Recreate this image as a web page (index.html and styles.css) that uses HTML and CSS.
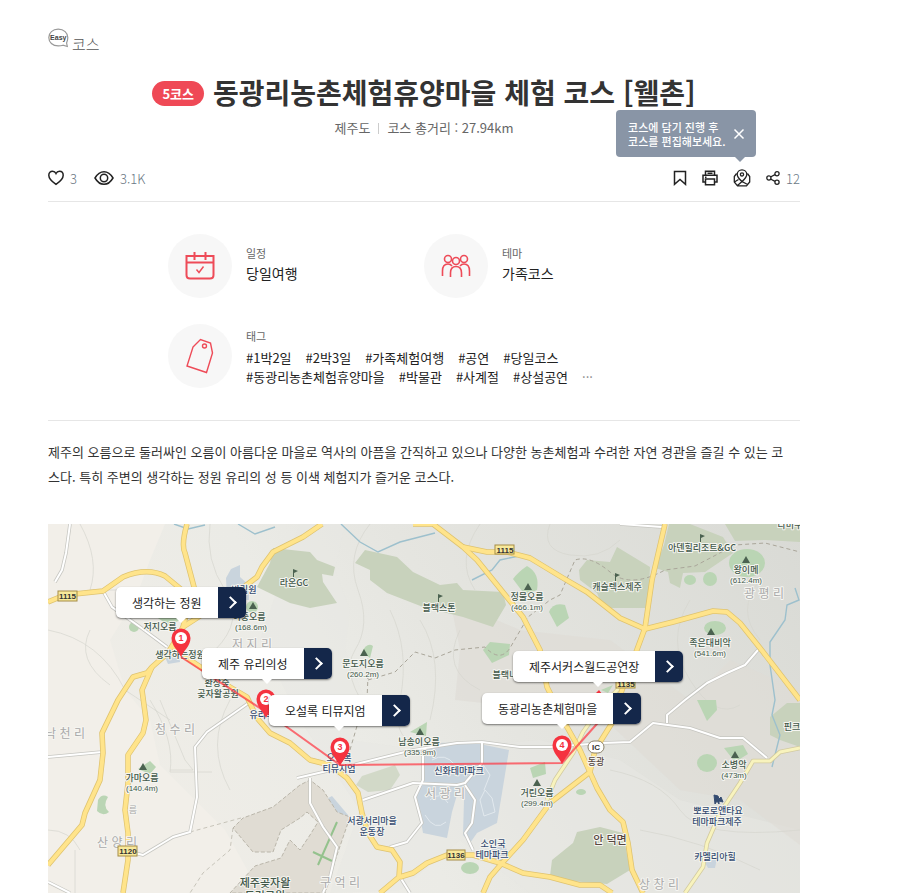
FILE: index.html
```html
<!DOCTYPE html>
<html lang="ko">
<head>
<meta charset="utf-8">
<meta name="viewport" content="width=device-width, initial-scale=1">
<title>동광리농촌체험휴양마을 체험 코스</title>
<link rel="stylesheet" href="styles.css">
</head>
<body>
<main class="page">
  <div class="category">
    <svg class="easy" width="22" height="20" viewBox="0 0 22 20" aria-hidden="true">
      <path d="M19.300 18.500L15 17.200C13.500 17.700 12 17.900 10.300 17.900C4.500 17.900 .8 14.200 .8 9.500C.8 4.800 4.600 1.200 10.200 1.200C15.900 1.200 19.800 4.800 19.800 9.500C19.800 12 19 14 18.600 15Z" fill="#fff" stroke="#999" stroke-width="1.200"/>
      <text x="10.300" y="12" class="easy-text">Easy</text>
    </svg>
    <span>코스</span>
  </div>

  <header class="heading">
    <div class="title-row">
      <span class="badge">5코스</span>
      <h1>동광리농촌체험휴양마을 체험 코스 [웰촌]</h1>
    </div>
    <p class="meta"><span>제주도</span><span class="bar"></span><span>코스 총거리 : 27.94km</span></p>
  </header>

  <div class="toolbar">
    <div class="group">
      <button type="button" class="tool" aria-label="좋아요">
        <svg width="16" height="16" viewBox="0 0 16 16"><path d="M8 14.300C5 12.300 .8 9 .8 5.200C.8 2.800 2.500 1.200 4.500 1.200C6.200 1.200 7.400 2.200 8 3.500C8.600 2.200 9.800 1.200 11.500 1.200C13.500 1.200 15.200 2.800 15.200 5.200C15.200 9 11 12.300 8 14.300Z" class="line"/></svg>
        <span>3</span>
      </button>
      <span class="tool views">
        <svg width="20" height="16" viewBox="0 0 20 16"><path d="M1 8C3.200 4.200 6.500 1.700 10 1.700S16.800 4.200 19 8C16.800 11.800 13.500 14.300 10 14.300S3.200 11.800 1 8Z" class="line"/><circle cx="10" cy="8" r="3.700" class="line"/></svg>
        <span>3.1K</span>
      </span>
    </div>
    <div class="group actions">
      <button type="button" class="tool" aria-label="북마크">
        <svg width="14" height="16" viewBox="0 0 14 16"><path d="M1.500 1.500H12.500V14.300L7 9.500L1.500 14.300Z" class="line"/></svg>
      </button>
      <button type="button" class="tool" aria-label="인쇄">
        <svg width="16" height="16" viewBox="0 0 16 16"><path d="M3.500 5V1.200H12.500V5M3.500 12H1V5.300H15V12H12.500M3.500 9H12.500V14.800H3.500ZM5.500 3.200H10.500M3 7.200H4.500" class="line"/></svg>
      </button>
      <div class="tip-anchor">
        <button type="button" class="tool" aria-label="코스에 담기">
          <svg width="18" height="18" viewBox="0 0 18 18"><g class="line fine"><path d="M9 12.500C6.500 10.200 4.200 8 4.200 5.400A4.800 4.600 0 0 1 13.800 5.400C13.800 8 11.500 10.200 9 12.500Z"/><circle cx="9" cy="5.400" r="1.600"/><path d="M3.600 4.500L1.300 7.500V13L4.500 16.800H13.500L16.700 13V7.500L14.400 4.500M1.800 12.800L5.500 10.500M4.500 16.500L9 12.500L15 15.800"/></g></svg>
        </button>
        <div class="tooltip" role="status">
          <p>코스에 담기 진행 후<br>코스를 편집해보세요.</p>
          <button type="button" aria-label="닫기"><svg width="12" height="12" viewBox="0 0 12 12"><path d="M1.500 1.500L10.500 10.500M10.500 1.500L1.500 10.500" stroke="#fff" stroke-width="1.500"/></svg></button>
        </div>
      </div>
      <button type="button" class="tool share" aria-label="공유">
        <svg width="14" height="14" viewBox="0 0 14 14"><g class="line fine"><path d="M4.500 6L9 3.600M4.500 8L9 10.400"/><circle cx="2.900" cy="7" r="2.100"/><circle cx="11" cy="2.800" r="2.100"/><circle cx="11" cy="11.200" r="2.100"/></g></svg>
        <span>12</span>
      </button>
    </div>
  </div>

  <section class="info">
    <div class="item">
      <span class="disc"><svg width="30" height="30" viewBox="0 0 30 30"><path d="M1.500 5H28.500V24Q28.500 27.500 25 27.500H5Q1.500 27.500 1.500 24ZM1.500 11.500H28.500M9.500 1V9M20.500 1V9" class="red"/><path d="M11.500 18.500L14 21.500L18.500 15.500" class="red thin"/></svg></span>
      <dl><dt>일정</dt><dd>당일여행</dd></dl>
    </div>
    <div class="item">
      <span class="disc"><svg width="30" height="24" viewBox="0 0 30 24"><g class="red mid"><circle cx="7" cy="5" r="3.500"/><circle cx="23" cy="5" r="3.500"/><circle cx="15" cy="7" r="3.500"/><path d="M1.500 22V17Q1.500 10 7 10Q9.500 10 11 12M28.500 22V17Q28.500 10 23 10Q20.500 10 19 12M9.500 23V19Q9.500 12.500 15 12.500T20.500 19V23"/></g></svg></span>
      <dl><dt>테마</dt><dd>가족코스</dd></dl>
    </div>
    <div class="item wide">
      <span class="disc"><svg width="30" height="36" viewBox="0 0 30 36"><path d="M8 9L15.500 1.500L25.500 5L27.500 15L21.500 34.500L2 28Z" class="red thin"/><circle cx="19.500" cy="8" r="2" class="red thin"/></svg></span>
      <dl><dt>태그</dt><dd class="tags"><span>#1박2일</span><span>#2박3일</span><span>#가족체험여행</span><span>#공연</span><span>#당일코스</span><span>#동광리농촌체험휴양마을</span><span>#박물관</span><span>#사계절</span><span>#상설공연</span><span class="more">···</span></dd></dl>
    </div>
  </section>

  <p class="description">제주의 오름으로 둘러싸인 오름이 아름다운 마을로 역사의 아픔을 간직하고 있으나 다양한 농촌체험과 수려한 자연 경관을 즐길 수 있는 코<br>스다. 특히 주변의 생각하는 정원 유리의 성 등 이색 체험지가 즐거운 코스다.</p>

  <section class="map">
    <svg class="terrain" viewBox="48 524 752 369" role="img" aria-label="코스 지도">
      <defs>
        <linearGradient id="land" x1="0" y1="0.300" x2="1" y2="0"><stop offset="0" stop-color="#efede7"/><stop offset=".3" stop-color="#ebebe6"/><stop offset=".5" stop-color="#e5e5e0"/><stop offset="1" stop-color="#d9dad5"/></linearGradient>
        <path id="peak" d="M0 -4L4 3H-4Z"/>
        <path id="flag" d="M-2 4V-4L3 -2L-1 0V4Z"/>
        <g id="pin"><path d="M0 0C-3 -7 -9.500 -11 -9.500 -19A9.500 9.500 0 0 1 9.500 -19C9.500 -11 3 -7 0 0Z" fill="#f5333f"/><circle cy="-19" r="6" fill="#fff"/></g>
      </defs>
      <rect x="48" y="524" width="752" height="369" fill="url(#land)"/>
      <path d="M48 524H165L150 560L135 600L110 640L125 690L150 720L160 765L195 800L225 830L260 893H48Z" fill="#f2efe9"/>
      <path d="M345 524L335 570L350 610L345 650L365 700L350 740L420 750L540 740L620 760L680 800L800 830V893H530L460 840L400 890L330 893L360 810L300 720L260 640L300 524Z" fill="#e7e8e3" opacity=".5"/>
      <path d="M450 600L460 650L455 700L600 715L680 790L740 800L800 845V690L730 660L690 700L610 640L520 630Z" fill="#dedcd6" opacity=".65"/>

      <g class="contour">
        <path d="M210 524Q205 560 225 590T215 650M370 524Q345 555 358 590T355 650T375 720M390 610Q410 650 400 700T430 740M420 620Q445 660 430 720M460 630Q440 670 480 690M230 700Q205 745 230 790M480 524Q455 560 475 590M550 524Q540 550 570 555T620 540M690 600Q665 640 690 680T740 705M760 580Q735 610 760 640M610 770Q660 780 680 810T800 830M640 830Q700 840 760 870M80 524Q100 560 90 590H150M48 630Q100 640 125 690L170 720M150 700Q175 740 170 772H212M90 630Q75 660 110 685M48 830Q70 830 80 850M75 850V893M160 700L185 760L193 770H170"/>
      </g>

      <g fill="#c8d2bc">
        <path d="M273 548L310 552L317 560L335 567L333 576L322 574L323 582L337 603L310 608L290 603L257 587L270 563Z"/>
        <path d="M355 563L365 550L397 557L413 572L440 585L457 583L463 590L503 592L506 605L493 627L463 617L423 607L387 593L370 580V570Z"/>
        <path d="M579 570L587 560L610 562L617 547L650 567L648 608H603L597 593L580 580Z"/>
        <path d="M669 524H690L723 537L733 553L705 572L683 573L680 588L670 583L668 572L655 568L664 545Z"/>
        <path d="M725 524H800V542L765 540L735 541Z"/>
        <path d="M550 876L552 860L573 843L577 832L600 827L623 833L630 870L607 884L570 881Z"/>
        <path d="M770 717L787 703H800V747L780 740L770 735Z"/>
        <path d="M356 785L362 776L395 765L400 775L390 790L368 792Z" fill="#d2d9c8"/>
      </g>
      <g fill="#bad5b4">
        <ellipse cx="747" cy="563" rx="18" ry="14"/><circle cx="710" cy="579" r="7"/><ellipse cx="690" cy="580" rx="6" ry="5"/>
        <path d="M513 579Q518 572 527 566Q540 573 537 590L525 595Z"/><path d="M549 612Q553 602 565 605L569 618L557 627Z"/>
        <ellipse cx="715" cy="628" rx="11" ry="7"/><path d="M483 650L490 642L510 644L509 655L492 663Z"/><path d="M362 652Q367 642 373 646L370 658Z"/>
        <ellipse cx="707" cy="763" rx="10" ry="9"/><path d="M724 748L743 745L748 754L735 762Z"/><path d="M697 700H716L717 710L707 721Z"/><path d="M410 732L427 722L426 736Z"/>
        <path d="M530 768L545 762L546 774L533 778Z"/><ellipse cx="470" cy="868" rx="9" ry="6"/><path d="M98 800Q102 793 108 797Q102 806 109 812Q103 817 97 811Z"/><path d="M138 769L150 761L156 767L150 774Z"/>
        <circle cx="134" cy="627" r="5"/><path d="M152 614H181V620L168 625Z"/><circle cx="252" cy="607" r="6"/><path d="M601 690L613 685L608 693Z"/><ellipse cx="581" cy="792" rx="5" ry="3"/>
      </g>
      <g fill="#c9d4dd">
        <path d="M423 748L437 743L470 742L509 750L502 793L497 823L477 833L470 843L463 835L464 800L457 795L452 812L447 838L423 833L416 793L423 780Z"/>
        <path d="M226 578L231 569L240 565V577L249 585V600H227Z"/><path d="M319 803L332 796L348 815L346 820L325 817Z"/><path d="M164 655L178 648L180 662L168 664Z"/><path d="M488 850L505 845L510 859L492 862Z"/><path d="M704 861L717 858L715 868L708 868Z"/><path d="M310 853L333 862L325 868L310 865Z"/>
      </g>
      <path d="M480 800L485 790L492 798L495 812L484 816ZM430 800Q440 790 448 803M425 815Q435 832 446 822M432 760Q445 752 455 765M480 760L490 775L484 790" fill="none" stroke="#e2e9ee"/>
      <path d="M300 785L273 807L243 818L233 828L253 852H273L281 830L300 818L307 812L318 822L310 835L300 850L290 840L281 858L255 866L230 893H325L337 855L350 817L337 812L323 790L310 780Z" fill="#e0dcd3" stroke="#bab6aa" stroke-dasharray="4 2"/>
      <path d="M241 818L190 832M233 828L230 850L203 873L190 893" class="trail" opacity=".6"/>
      <path d="M368 680L395 672L415 652L435 658L455 650L485 647Q500 663 510 648L528 617L550 600L560 595L575 560Q590 555 610 572T665 570L695 566L735 545L765 543L800 552M357 726L347 760M367 700L368 676" class="trail"/>
      <path d="M174 524L188 529L205 525M238 524L255 534L275 527M341 524L360 542L378 552L400 542L435 533M472 580L492 570L500 560L519 556M795 588L799 600L787 605L785 620L770 642V665L775 700L772 715L780 735L772 767" class="river"/>
      <path d="M337 822L318 865M313 852L332 861" stroke="#94c28d" stroke-width="2" fill="none"/>

      <g>
        <path class="white-case" d="M70 524L66 553L62 570L55 582M103 591L112 607L140 627L167 647M48 757L70 755L102 752M250 702L207 732L195 747L197 797L190 832L173 837L143 855L131 852M297 778L340 768L413 750L457 743L482 742L520 747H550L603 743L630 742L653 723L690 728L720 738L743 738L767 758M667 723V715L685 700L707 683L727 673L745 665L758 650M363 800L413 783L457 785L465 783L482 763V742M423 750V780L415 797L422 823L407 842L390 847M465 785L475 800L472 823L465 833L473 850M310 778V803L323 827L337 847L330 877L323 893M400 877L410 893M48 882L70 893M620 524L662 527"/>
        <path class="white" d="M70 524L66 553L62 570L55 582M103 591L112 607L140 627L167 647M48 757L70 755L102 752M250 702L207 732L195 747L197 797L190 832L173 837L143 855L131 852M297 778L340 768L413 750L457 743L482 742L520 747H550L603 743L630 742L653 723L690 728L720 738L743 738L767 758M667 723V715L685 700L707 683L727 673L745 665L758 650M363 800L413 783L457 785L465 783L482 763V742M423 750V780L415 797L422 823L407 842L390 847M465 785L475 800L472 823L465 833L473 850M310 778V803L323 827L337 847L330 877L323 893M400 877L410 893M48 882L70 893M620 524L662 527"/>
      </g>
      <path class="pale-case" d="M595 715L583 732L573 753L555 780L547 800M600 708L622 685M800 748L780 752L770 761L753 761L740 783L720 813L707 843L703 867L685 893"/>
      <path class="pale" d="M595 715L583 732L573 753L555 780L547 800M600 708L622 685M800 748L780 752L770 761L753 761L740 783L720 813L707 843L703 867L685 893"/>
      <g class="road-case">
        <path d="M48 602L65 595L103 591L123 577Q147 567 165 576L182 590M187 524Q181 545 185 553L194 587L183 627L168 653L152 667L147 673L133 677L118 700L102 733L103 753L100 780L85 813L82 825L48 865"/>
        <path d="M152 667L142 690L146 720L143 733L128 755V783L125 810L128 833V860L123 893M322 524L303 537L273 552L262 567L257 577L240 590L183 627"/>
        <path d="M173 647L190 660L230 687L247 697L257 718L270 733L290 743L310 760L330 765L347 778L358 793L362 813L368 833L377 847L392 850L400 862L399 877L380 893M400 877L413 873L427 863L447 855H473L500 863L523 873L550 877L580 885H600L612 893"/>
        <path d="M483 893L490 877L503 862L523 840L550 803L590 772L595 750L612 723L622 690L645 628L652 580L665 524M413 524H433L463 547L477 560L523 617L540 650L547 687L567 727L580 750L597 788L610 810L623 822L628 843L632 870L643 893"/>
        <path d="M463 547L487 552H507L530 558L563 578L587 592L620 618L645 629L673 622L713 611L727 612L740 623L760 648L800 700"/>
      </g>
      <g class="road">
        <path d="M48 602L65 595L103 591L123 577Q147 567 165 576L182 590M187 524Q181 545 185 553L194 587L183 627L168 653L152 667L147 673L133 677L118 700L102 733L103 753L100 780L85 813L82 825L48 865"/>
        <path d="M152 667L142 690L146 720L143 733L128 755V783L125 810L128 833V860L123 893M322 524L303 537L273 552L262 567L257 577L240 590L183 627"/>
        <path d="M173 647L190 660L230 687L247 697L257 718L270 733L290 743L310 760L330 765L347 778L358 793L362 813L368 833L377 847L392 850L400 862L399 877L380 893M400 877L413 873L427 863L447 855H473L500 863L523 873L550 877L580 885H600L612 893"/>
        <path d="M483 893L490 877L503 862L523 840L550 803L590 772L595 750L612 723L622 690L645 628L652 580L665 524M413 524H433L463 547L477 560L523 617L540 650L547 687L567 727L580 750L597 788L610 810L623 822L628 843L632 870L643 893"/>
        <path d="M463 547L487 552H507L530 558L563 578L587 592L620 618L645 629L673 622L713 611L727 612L740 623L760 648L800 700"/>
      </g>

      <g class="district">
        <text x="252" y="649">저 지 리</text><text x="175" y="734">청 수 리</text><text x="65" y="738">낙 천 리</text><text x="117" y="847">산 양 리</text><text x="445" y="798">서 광 리</text><text x="340" y="887">구 억 리</text><text x="764" y="598">광 평 리</text><text x="659" y="889">상 창 리</text><text x="133" y="813" class="small">름</text>
      </g>

      <g class="shield">
        <rect x="58" y="591" width="19" height="10"/><rect x="495" y="545" width="19" height="9"/><rect x="118" y="846" width="19" height="10"/><rect x="447" y="850" width="18" height="10"/><rect x="616" y="679" width="19" height="9"/><rect x="588" y="741" width="16" height="12" rx="6" class="ic"/>
        <text x="67.500" y="599">1115</text><text x="505" y="553">1115</text><text x="128" y="854">1120</text><text x="456" y="858">1136</text><text x="626" y="687">1135</text><text x="596" y="750">IC</text>
      </g>

      <g fill="#4b6250">
        <use href="#peak" x="253" y="606"/><use href="#peak" x="364" y="653"/><use href="#peak" x="528" y="587"/><use href="#peak" x="746" y="560"/><use href="#peak" x="711" y="632"/><use href="#peak" x="143" y="767"/><use href="#peak" x="420" y="732"/><use href="#peak" x="537" y="783"/><use href="#peak" x="735" y="755"/>
        <use href="#flag" x="295" y="573"/><use href="#flag" x="440" y="598"/><use href="#flag" x="617" y="577"/><use href="#flag" x="702" y="538"/>
      </g>
      <path d="M714 795L718 796L719 799L721 797L723 802L719 801V804L717 801L715 804Z" fill="#344b70" stroke="#344b70"/>

      <g class="place green">
        <text x="294" y="586">라온GC</text><text x="439" y="611">블랙스톤</text><text x="617" y="590">캐슬렉스제주</text><text x="702" y="551">아덴힐리조트&amp;GC</text><text x="790" y="528">라미쿠</text><text x="505" y="678">블랙나</text><text x="792" y="730">핀크</text>
        <text x="160" y="630">저지오름</text><text x="249" y="620">허중오름</text><text x="251" y="630" class="height">(168.6m)</text>
        <text x="363" y="667">문도지오름</text><text x="363" y="677" class="height">(260.2m)</text>
        <text x="527" y="600">정물오름</text><text x="527" y="610" class="height">(466.1m)</text>
        <text x="746" y="573">왕이메</text><text x="746" y="583" class="height">(612.4m)</text>
        <text x="710" y="646">족은대비악</text><text x="710" y="656" class="height">(541.6m)</text>
        <text x="142" y="781">가마오름</text><text x="142" y="791" class="height">(140.4m)</text>
        <text x="419" y="745">남송이오름</text><text x="420" y="755" class="height">(335.9m)</text>
        <text x="537" y="796">거린오름</text><text x="537" y="806" class="height">(299.4m)</text>
        <text x="734" y="768">소병악</text><text x="734" y="778" class="height">(473m)</text>
        <text x="180" y="658">생각하는정원</text><text x="217" y="686">환상숲</text><text x="218" y="697">곶자왈공원</text><text x="265" y="887" class="large">제주곶자왈</text><text x="265" y="900" class="large">도립공원</text>
      </g>
      <g class="place blue">
        <text x="244" y="593">방림원</text><text x="266" y="718">유리의성</text><text x="339" y="761">오설록</text><text x="339" y="772">티뮤지엄</text><text x="459" y="774">신화테마파크</text><text x="372" y="824">서광서리마을</text><text x="372" y="835">운동장</text><text x="493" y="847">소인국</text><text x="492" y="858">테마파크</text><text x="718" y="814">뽀로로앤타요</text><text x="717" y="825">테마파크제주</text><text x="715" y="860">카멜리아힐</text>
      </g>
      <g class="place brown"><text x="596" y="765">동광</text><text x="610" y="844" class="large">안 덕면</text></g>

      <path d="M181 657L266 712L340 765L562 763L604 716" fill="none" stroke="#ff3440" stroke-opacity=".7" stroke-width="2"/>
      <g class="pins">
        <use href="#pin" x="181" y="657"/><text x="181" y="641">1</text>
        <use href="#pin" x="266" y="718"/><text x="266" y="702">2</text>
        <use href="#pin" x="340" y="766"/><text x="340" y="750">3</text>
        <use href="#pin" x="562" y="764"/><text x="562" y="748">4</text>
        <path d="M595 694L599 690L602 694Z" fill="#f5333f"/>
      </g>
    </svg>
    <div class="stop stop-1"><span>생각하는 정원</span><a href="#garden" aria-label="생각하는 정원 보기"></a></div>
    <div class="stop stop-2"><span>제주 유리의성</span><a href="#glass" aria-label="제주 유리의성 보기"></a></div>
    <div class="stop stop-3"><span>오설록 티뮤지엄</span><a href="#tea" aria-label="오설록 티뮤지엄 보기"></a></div>
    <div class="stop stop-5"><span>제주서커스월드공연장</span><a href="#circus" aria-label="제주서커스월드공연장 보기"></a></div>
    <div class="stop stop-4"><span>동광리농촌체험마을</span><a href="#village" aria-label="동광리농촌체험마을 보기"></a></div>
  </section>
</main>
</body>
</html>
```
FILE: styles.css
```css
* { box-sizing: border-box; }
body, h1, p, dl, dd { margin: 0; }
body {
  background: #fff;
  color: #333;
  font-family: "Noto Sans CJK KR", "Noto Sans", sans-serif;
  font-size: 13px;
}
button {
  padding: 0;
  border: 0;
  background: none;
  font: inherit;
  color: inherit;
  cursor: pointer;
}
svg { display: block; }

.page { padding: 28px 110px 0 48px; }

.category {
  display: flex;
  gap: 2px;
  height: 28px;
  color: #555;
  font-size: 15px;
  line-height: 32px;
  font-weight: 300;
}
.easy-text {
  font: bold 7px "Liberation Sans", sans-serif;
  fill: #444;
  text-anchor: middle;
}

.heading { padding-top: 16px; }
.title-row {
  display: flex;
  justify-content: center;
  align-items: center;
  gap: 9px;
  height: 42px;
}
.badge {
  padding: 0 10px;
  border-radius: 13px;
  background: #ef4956;
  color: #fff;
  font-size: 13px;
  font-weight: 700;
  line-height: 25px;
}
h1 {
  font-size: 28px;
  line-height: 40px;
  padding-bottom: 2px;
  font-weight: 700;
  white-space: nowrap;
}
.meta {
  display: flex;
  justify-content: center;
  align-items: center;
  gap: 8px;
  padding-top: 4px;
  line-height: 20px;
  color: #666;
}
.bar { width: 1px; height: 11px; background: #ccc; }

.toolbar {
  display: flex;
  justify-content: space-between;
  height: 64px;
  padding-top: 28px;
  border-bottom: 1px solid #e6e6e6;
}
.group { display: flex; align-items: center; height: 24px; gap: 17px; }
.actions { gap: 15px; }
.tool {
  display: flex;
  align-items: center;
  gap: 6px;
  color: #6b7885;
  font-weight: 300;
}
.line { fill: none; stroke: #222; stroke-width: 1.5; }
.line.fine { stroke-width: 1.300; }
.tip-anchor { position: relative; }
.tooltip {
  position: absolute;
  right: -5px;
  bottom: 30px;
  display: flex;
  align-items: center;
  justify-content: space-between;
  width: 140px;
  height: 47px;
  padding: 0 11px 0 12px;
  border-radius: 4px;
  background: #8995a6;
  color: #fff;
  font-size: 11px;
  line-height: 14px;
  font-weight: 500;
  white-space: nowrap;
}
.tooltip::after {
  content: "";
  position: absolute;
  right: 11px;
  bottom: -5px;
  border: 5px solid transparent;
  border-top-color: #8995a6;
  border-bottom: 0;
}

.info {
  display: grid;
  grid-template-columns: 256px 256px;
  justify-content: center;
  gap: 26px 0;
  padding: 32px 0;
  border-bottom: 1px solid #e6e6e6;
}
.item { display: flex; align-items: center; gap: 14px; }
.item dl { padding-bottom: 4px; }
.wide { grid-column: span 2; }
.wide dl { padding: 0; }
.wide dt { margin-bottom: 3px; }
.disc {
  display: grid;
  place-items: center;
  flex: none;
  width: 64px;
  height: 64px;
  border-radius: 50%;
  background: #f7f7f7;
}
.red { fill: none; stroke: #ee4b58; stroke-width: 2; }
.red.mid { stroke-width: 1.600; }
.red.thin { stroke-width: 1.400; }
dt { color: #666; font-size: 11px; line-height: 18px; }
dd { color: #222; font-size: 14px; line-height: 22px; }
.tags {
  display: flex;
  flex-wrap: wrap;
  column-gap: 14px;
  max-width: 360px;
  font-size: 13px;
  line-height: 19px;
}
.more { color: #888; }

.description {
  padding: 18px 0 35px;
  line-height: 25px;
}

.map { position: relative; overflow: hidden; }
.terrain { width: 100%; height: auto; }
.contour { fill: none; stroke: #d5d5cf; stroke-width: 1; opacity: .7; }
.trail { fill: none; stroke: #aaa69a; stroke-width: 1; stroke-dasharray: 4 3; }
.river { fill: none; stroke: #9dc0cd; stroke-width: 1.400; }
.white-case, .white, .pale-case, .pale, .road-case, .road { fill: none; stroke-linejoin: round; }
.white-case { stroke: #c6c6c1; stroke-width: 3.500; }
.white { stroke: #fff; stroke-width: 2; }
.pale-case { stroke: #d2caa0; stroke-width: 4.500; }
.pale { stroke: #f8f3bd; stroke-width: 3; }
.road-case { stroke: #dfc36f; stroke-width: 5.500; }
.road { stroke: #ffe48b; stroke-width: 4; }
.shield { fill: #f8e99a; stroke: #a58c46; }
.shield .ic { fill: #fff; stroke: #8d846d; }
.shield text { fill: #333; stroke: none; font: bold 8px "Liberation Sans", sans-serif; text-anchor: middle; }
.place, .district { text-anchor: middle; paint-order: stroke; stroke: #f5f5f1; stroke-width: 2; stroke-linejoin: round; }
.place { font-size: 9px; font-weight: 500; }
.place .height { font: 8px "Liberation Sans", sans-serif; }
.place .large { font-size: 11px; }
.green { fill: #42584a; }
.blue { fill: #344b70; }
.brown { fill: #57483f; }
.district { font-size: 12px; fill: #aaa; }
.district .small { font-size: 9px; }
.pins text { fill: #f5333f; font: bold 9px "Liberation Sans", sans-serif; text-anchor: middle; }

.stop {
  position: absolute;
  display: flex;
  height: 31px;
  border-radius: 5px;
  background: #fff;
  box-shadow: 0 1px 2px rgba(0, 0, 0, .5);
  color: #222;
  font-size: 12px;
  line-height: 31px;
  white-space: nowrap;
}
.stop span { padding: 0 16px; }
.stop span::after {
  content: "";
  position: absolute;
  left: calc(50% - 5px);
  top: 31px;
  border: 5px solid transparent;
  border-top-color: #fff;
  border-bottom: 0;
}
.stop a {
  display: grid;
  place-items: center;
  width: 28px;
  border-radius: 0 5px 5px 0;
  background: #14274a;
}
.stop a::before {
  content: "";
  width: 7px;
  height: 7px;
  margin-right: 3px;
  border: solid #fff;
  border-width: 2px 2px 0 0;
  transform: rotate(45deg);
}
.stop-1 { left: calc(68 / 752 * 100%); top: calc(63 / 369 * 100%); }
.stop-2 { left: calc(154 / 752 * 100%); top: calc(124 / 369 * 100%); }
.stop-3 { left: calc(221 / 752 * 100%); top: calc(171 / 369 * 100%); }
.stop-4 { left: calc(434 / 752 * 100%); top: calc(169 / 369 * 100%); }
.stop-5 { left: calc(465 / 752 * 100%); top: calc(127 / 369 * 100%); }
```
